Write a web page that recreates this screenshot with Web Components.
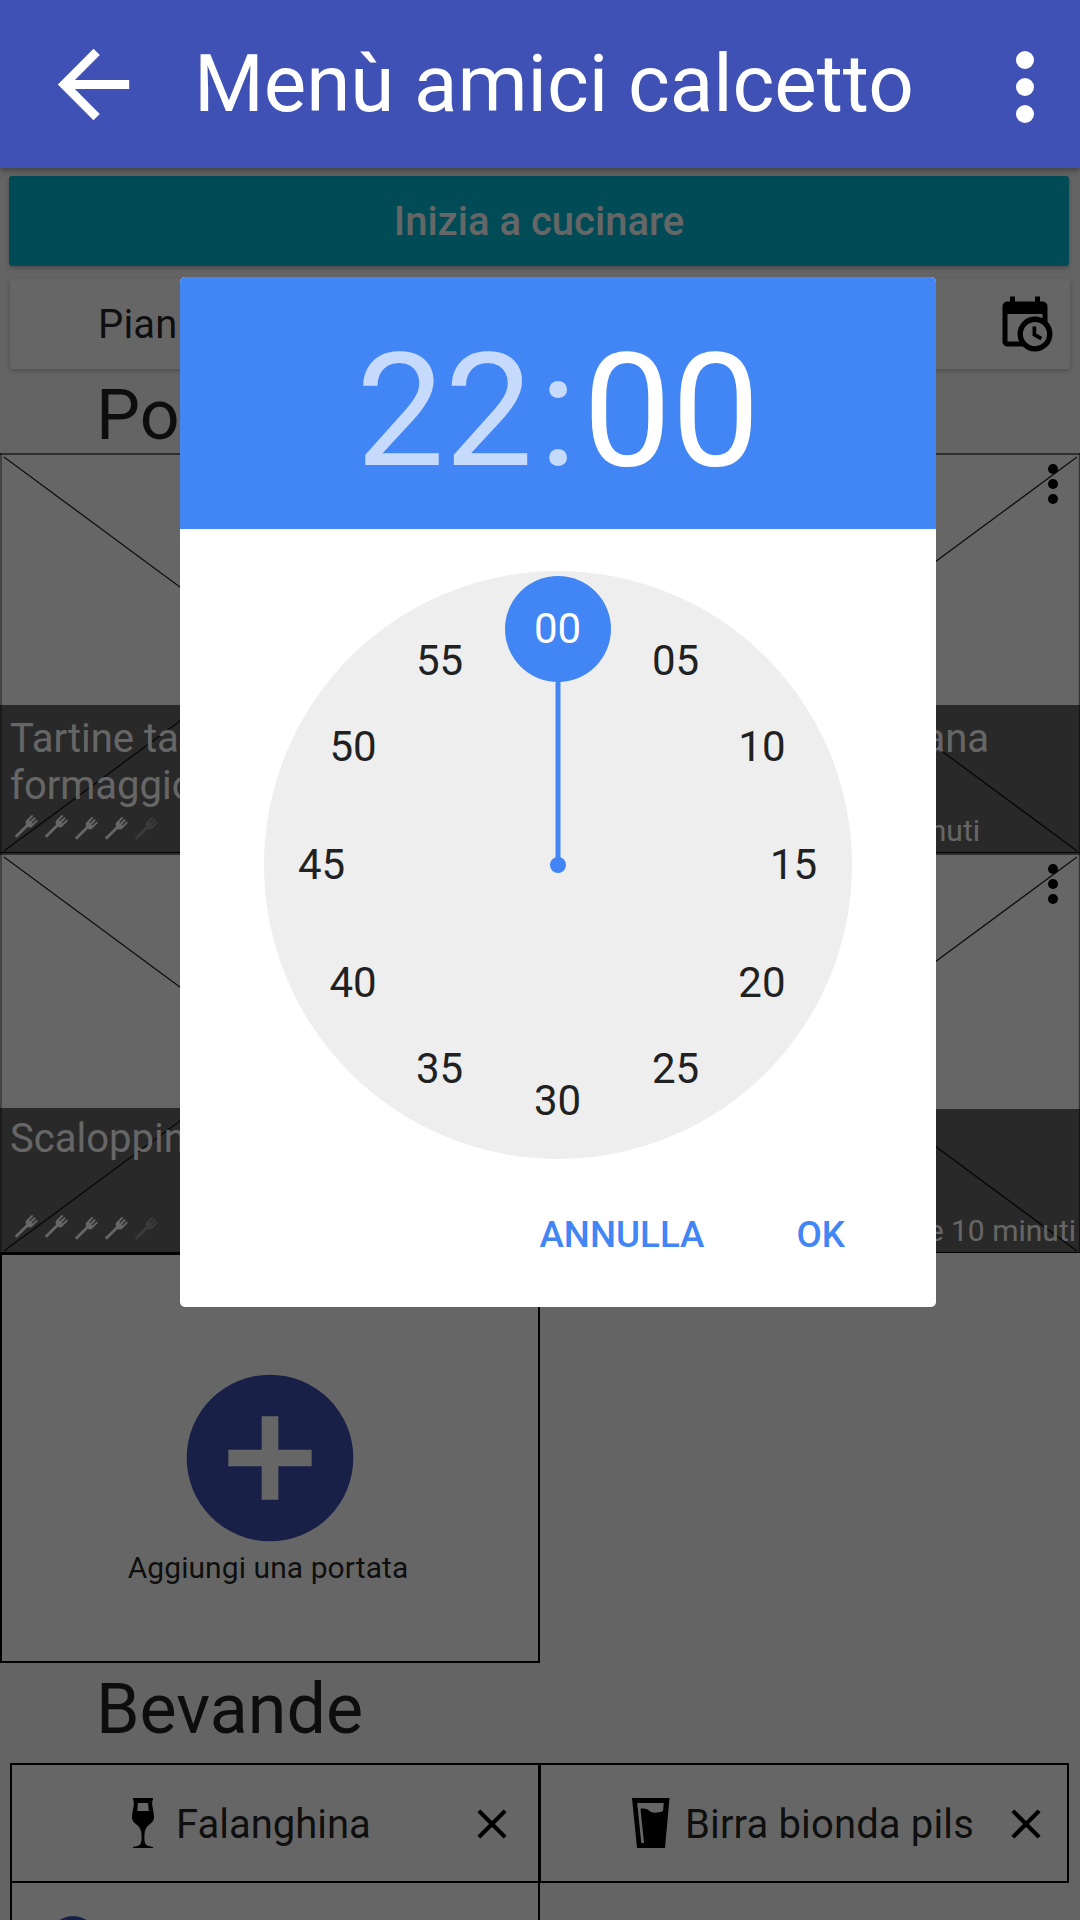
<!DOCTYPE html>
<html lang="it">
<head>
<meta charset="utf-8">
<title>Menù amici calcetto</title>
<style>
html,body{margin:0;height:1920px;overflow:hidden}
body{font-family:Roboto,"Liberation Sans",sans-serif;color:rgba(0,0,0,.87);background:#fafafa}
</style>
</head>
<body>
<menu-page></menu-page>
<script>
const define = (name, html) => {
  const t = document.createElement('template');
  t.innerHTML = html;
  customElements.define(name, class extends HTMLElement {
    constructor() {
      super();
      this.attachShadow({mode: 'open'}).append(t.content.cloneNode(true));
    }
  });
};

define('app-toolbar', `
<style>
:host{display:flex;align-items:center;height:168px;box-sizing:border-box;padding:0 1px 0 40px;background:#3f51b5;color:#fff;
  box-shadow:0 2px 6px rgba(0,0,0,.4);position:relative;z-index:3}
h1{margin:0 0 0 47px;flex:1;font-size:80px;font-weight:400;line-height:168px;white-space:nowrap;letter-spacing:-.07px}
svg{display:block;fill:currentColor;flex:none}
.more{margin-top:6px}
</style>
<svg width="107" height="107" viewBox="0 0 24 24"><path d="M20 11H7.83l5.59-5.59L12 4l-8 8 8 8 1.41-1.41L7.83 13H20v-2z"/></svg>
<h1><slot></slot></h1>
<svg class="more" width="108" height="108" viewBox="0 0 24 24"><circle cx="12" cy="6" r="2"/><circle cx="12" cy="12" r="2"/><circle cx="12" cy="18" r="2"/></svg>`);

define('start-button', `
<style>
:host{display:block;height:90px;margin:0 11px 13px 9px;border-radius:3px;background:#00bcd4;color:#fff;text-align:center;
  font-size:40px;font-weight:500;line-height:92px;box-shadow:0 2px 5px rgba(0,0,0,.26)}
</style><slot></slot>`);

define('plan-card', `
<style>
:host{display:flex;align-items:center;height:90px;margin:0 10px;box-sizing:border-box;padding:0 15px 0 88px;border-radius:3px;
  background:#fff;font-size:40px;line-height:90px;box-shadow:0 2px 5px rgba(0,0,0,.26)}
span{flex:1;padding-top:2px;letter-spacing:.2px}
svg{display:block}
</style>
<span><slot></slot></span>
<svg width="60" height="60" viewBox="0 0 24 24"><path d="M15,13H16.5V15.82L18.94,17.23L18.19,18.53L15,16.69V13M19,8H5V19H9.67C9.24,18.09 9,17.07 9,16A7,7 0 0,1 16,9C17.07,9 18.09,9.24 19,9.67V8M5,21C3.89,21 3,20.1 3,19V5C3,3.89 3.89,3 5,3H6V1H8V3H16V1H18V3H19A2,2 0 0,1 21,5V11.1C22.24,12.36 23,14.09 23,16A7,7 0 0,1 16,23C14.09,23 12.36,22.24 11.1,21H5M16,11.15A4.85,4.85 0 0,0 11.15,16C11.15,18.68 13.32,20.85 16,20.85A4.85,4.85 0 0,0 20.85,16C20.85,13.32 18.68,11.15 16,11.15Z"/></svg>`);

define('section-title', `
<style>
:host{display:block;height:var(--h,84px);padding-left:96px;font-size:70px;line-height:92px}
</style><slot></slot>`);

define('fork-icon', `
<style>
:host{display:block;width:24px;height:24px;flex:none}
svg{display:block}
</style>
<svg width="24" height="24" viewBox="0 0 24 24"><path d="M.8 21.8L13.500 9.300" stroke="#fff" stroke-width="2.8" fill="none"/><path d="M11.2 5.600L17 -.2l1.300 1.200-4 4.400.8.8 4.400-4.100 1.300 1.300-4.200 4.300.8.8 4.400-4 1.200 1.300-5.700 5.700c-1.400 1.100-2.800 1.300-4.200.5l-1.800-1.800c-.9-1.400-1-3-.1-4.600z" fill="#fff"/></svg>`);

define('dish-tile', `
<style>
:host{display:block;position:relative;height:400px;background:#fff;color:#fff;overflow:hidden}
.pic,.cap,.more{position:absolute;display:block}
.pic{inset:0}
.cap{left:0;right:0;bottom:0;top:var(--cap,252px);background:rgba(0,0,0,.6);display:flex;flex-direction:column;box-sizing:border-box;
  padding:calc(262px - var(--cap,252px)) 0 0 10px}
.title{flex:1;font-size:40px;line-height:47px;white-space:nowrap;width:var(--tw,auto);text-align:var(--ta,left)}
.foot{height:40px;display:flex;justify-content:space-between}
.forks{display:flex;gap:6px;padding:2px 0 0 5px}
.low{margin-top:2px}
.off{opacity:.3}
.time{font-size:30px;line-height:36px;padding-right:var(--tr,4px)}
.more{right:12px;top:1px}
:host([nomenu]) .more{display:none}
</style>
<svg class="pic" width="540" height="400"><path d="M4 4L537 398M537 4L4 398" stroke="#2a2a2a" stroke-width="1.3"/><path d="M0 1H540" stroke="#000" stroke-opacity=".55" stroke-width="2"/><path d="M0 399.5H540" stroke="#000"/><path d="M1 0V400M539.5 0V400" stroke="#000" stroke-opacity=".5" stroke-width="1.4"/></svg>
<div class="cap">
  <div class="title"><slot></slot></div>
  <div class="foot">
    <div class="forks"><fork-icon></fork-icon><fork-icon></fork-icon><fork-icon class="low"></fork-icon><fork-icon class="low"></fork-icon><fork-icon class="low off"></fork-icon></div>
    <div class="time"><slot name="time"></slot></div>
  </div>
</div>
<svg class="more" width="30" height="60" viewBox="0 0 12 24"><circle cx="6" cy="6" r="2"/><circle cx="6" cy="12" r="2"/><circle cx="6" cy="18" r="2"/></svg>`);

define('add-tile', `
<style>
:host{display:flex;flex-direction:column;align-items:center;width:540px;height:410px;box-sizing:border-box;border:2px solid #000;
  background:#fff;padding-top:103px}
svg{display:block}
span{line-height:36px;margin:-8px 4px 0 0;font-size:30px;letter-spacing:.07px}
</style>
<svg width="200" height="200" viewBox="0 0 24 24" fill="#3f51b5"><path d="M17,13H13V17H11V13H7V11H11V7H13V11H17M12,2A10,10 0 0,0 2,12A10,10 0 0,0 12,22A10,10 0 0,0 22,12A10,10 0 0,0 12,2Z"/></svg>
<span><slot></slot></span>`);

define('drink-tile', `
<style>
:host{display:flex;align-items:center;height:120px;box-sizing:border-box;border:2px solid #000;background:#fff;
  font-size:40px;line-height:116px;padding:0 var(--pr,21px) 0 0}
::slotted(svg){display:block;flex:none}
.name{flex:1;padding-top:3px;letter-spacing:var(--ls,0)}
.close{display:block;margin-top:2px}
</style>
<slot name="icon"></slot>
<span class="name"><slot></slot></span>
<svg class="close" width="50" height="50" viewBox="0 0 24 24"><path d="M19,6.41L17.59,5L12,10.59L6.41,5L5,6.41L10.59,12L5,17.59L6.41,19L12,13.41L17.59,19L19,17.59L13.41,12L19,6.41Z"/></svg>`);

define('drink-add', `
<style>
:host{display:block;height:120px;margin-top:-2px;box-sizing:border-box;border:2px solid #000;background:#fff;padding:28px 0 0 31px}
svg{display:block}
</style>
<svg width="60" height="60" viewBox="0 0 24 24" fill="#3f51b5"><path d="M17,13H13V17H11V13H7V11H11V7H13V11H17M12,2A10,10 0 0,0 2,12A10,10 0 0,0 12,22A10,10 0 0,0 22,12A10,10 0 0,0 12,2Z"/></svg>`);

{
  const minutes = ['00','05','10','15','20','25','30','35','40','45','50','55'].map((m, i) => {
    const a = i * Math.PI / 6, x = 293.5 + 236 * Math.sin(a), y = 294 - 236 * Math.cos(a) + 14;
    return `<text x="${x.toFixed(1)}" y="${y.toFixed(1)}"${i ? '' : ' fill="#fff"'}>${m}</text>`;
  }).join('');
  define('clock-face', `
<style>
:host{display:block;width:588px;height:588px;border-radius:50%;background:#eee}
svg{display:block}
</style>
<svg width="588" height="588" font-size="42" text-anchor="middle" fill="#212121">
<g fill="#4285f4"><path d="M294 58V294" stroke="#4285f4" stroke-width="5"/><circle cx="294" cy="294" r="8"/><circle cx="294" cy="58" r="53"/></g>${minutes}</svg>`);
}

define('time-dialog', `
<style>
:host{display:flex;flex-direction:column;width:756px;height:1030px;border-radius:5px;overflow:hidden;background:#fff}
header{height:252px;background:#4285f4;color:rgba(255,255,255,.7);font-size:157.5px;line-height:268px;text-align:center}
i{font-style:normal;margin:0 6px}
b{font-weight:400;color:#fff}
clock-face{margin:42px auto 0}
footer{display:flex;justify-content:flex-end;gap:92px;padding:54px 91px 0 0;font-size:36.75px;font-weight:500;line-height:44px;color:#4285f4}
</style>
<header>22<i>:</i><b>00</b></header>
<clock-face></clock-face>
<footer><span>ANNULLA</span><span>OK</span></footer>`);

define('menu-page', `
<style>
:host{display:block;position:relative;width:1080px;height:1920px;overflow:hidden;background:#fafafa}
main{padding-top:8px}
.dishes{display:grid;grid-template-columns:540px 540px}
.drinks{display:grid;grid-template-columns:530px 530px;padding-left:10px}
.second{margin-left:-1px;width:530px;--pr:16px;--ls:.14px}
.scrim{position:absolute;inset:0;z-index:2;background:rgba(0,0,0,.6);box-sizing:border-box;padding:277px 0 0 180px}
.wine{margin:0 22px 0 120px}
.beer{margin:0 15px 0 91px}
</style>
<app-toolbar>Menù amici calcetto</app-toolbar>
<main>
  <start-button>Inizia a cucinare</start-button>
  <plan-card>Pianifica</plan-card>
  <section-title>Portate</section-title>
  <div class="dishes">
    <dish-tile nomenu>Tartine tartufo e<br>formaggio<span slot="time">15 minuti</span></dish-tile>
    <dish-tile style="--tw:439px;--ta:right;--tr:100px">siciliana<span slot="time">40 minuti</span></dish-tile>
    <dish-tile nomenu style="--cap:255px">Scaloppine<span slot="time">30 minuti</span></dish-tile>
    <dish-tile style="--cap:256px"><span slot="time">1 ora e 10 minuti</span></dish-tile>
  </div>
  <add-tile>Aggiungi una portata</add-tile>
  <section-title style="--h:100px">Bevande</section-title>
  <div class="drinks">
    <drink-tile><svg slot="icon" class="wine" width="22" height="50" viewBox="0 0 22 50" fill-rule="evenodd"><path d="M1 0H21V1.5C20 3 20 5 20.3 7.500C21 12 22 16 22 19C22 23 20 24.500 17.500 26.500C14 29 12.800 32 12.500 36C12.200 41 12.500 44 13.500 46C15 48 18 48 21 49V50H1V49C4 48 7 48 8.500 46C9.500 44 9.800 41 9.500 36C9.200 32 8 29 4.500 26.500C2 24.500 0 23 0 19C0 16 1 12 1.700 7.500C2 5 2 3 1 1.500ZM6 5L5.200 13H16.800L16 5Z"/></svg>Falanghina</drink-tile>
    <drink-tile class="second"><svg slot="icon" class="beer" width="38" height="50" viewBox="0 0 38 50" fill-rule="evenodd"><path d="M0 0H37.500L33 50H5ZM5.200 5L9.300 45H12L8.500 10.700C12 10 15 10.500 17 12.500C20 15.500 26 15 31 13L31.800 5Z"/></svg>Birra bionda pils</drink-tile>
    <drink-add></drink-add>
  </div>
</main>
<div class="scrim"><time-dialog></time-dialog></div>`);
</script>
</body>
</html>
